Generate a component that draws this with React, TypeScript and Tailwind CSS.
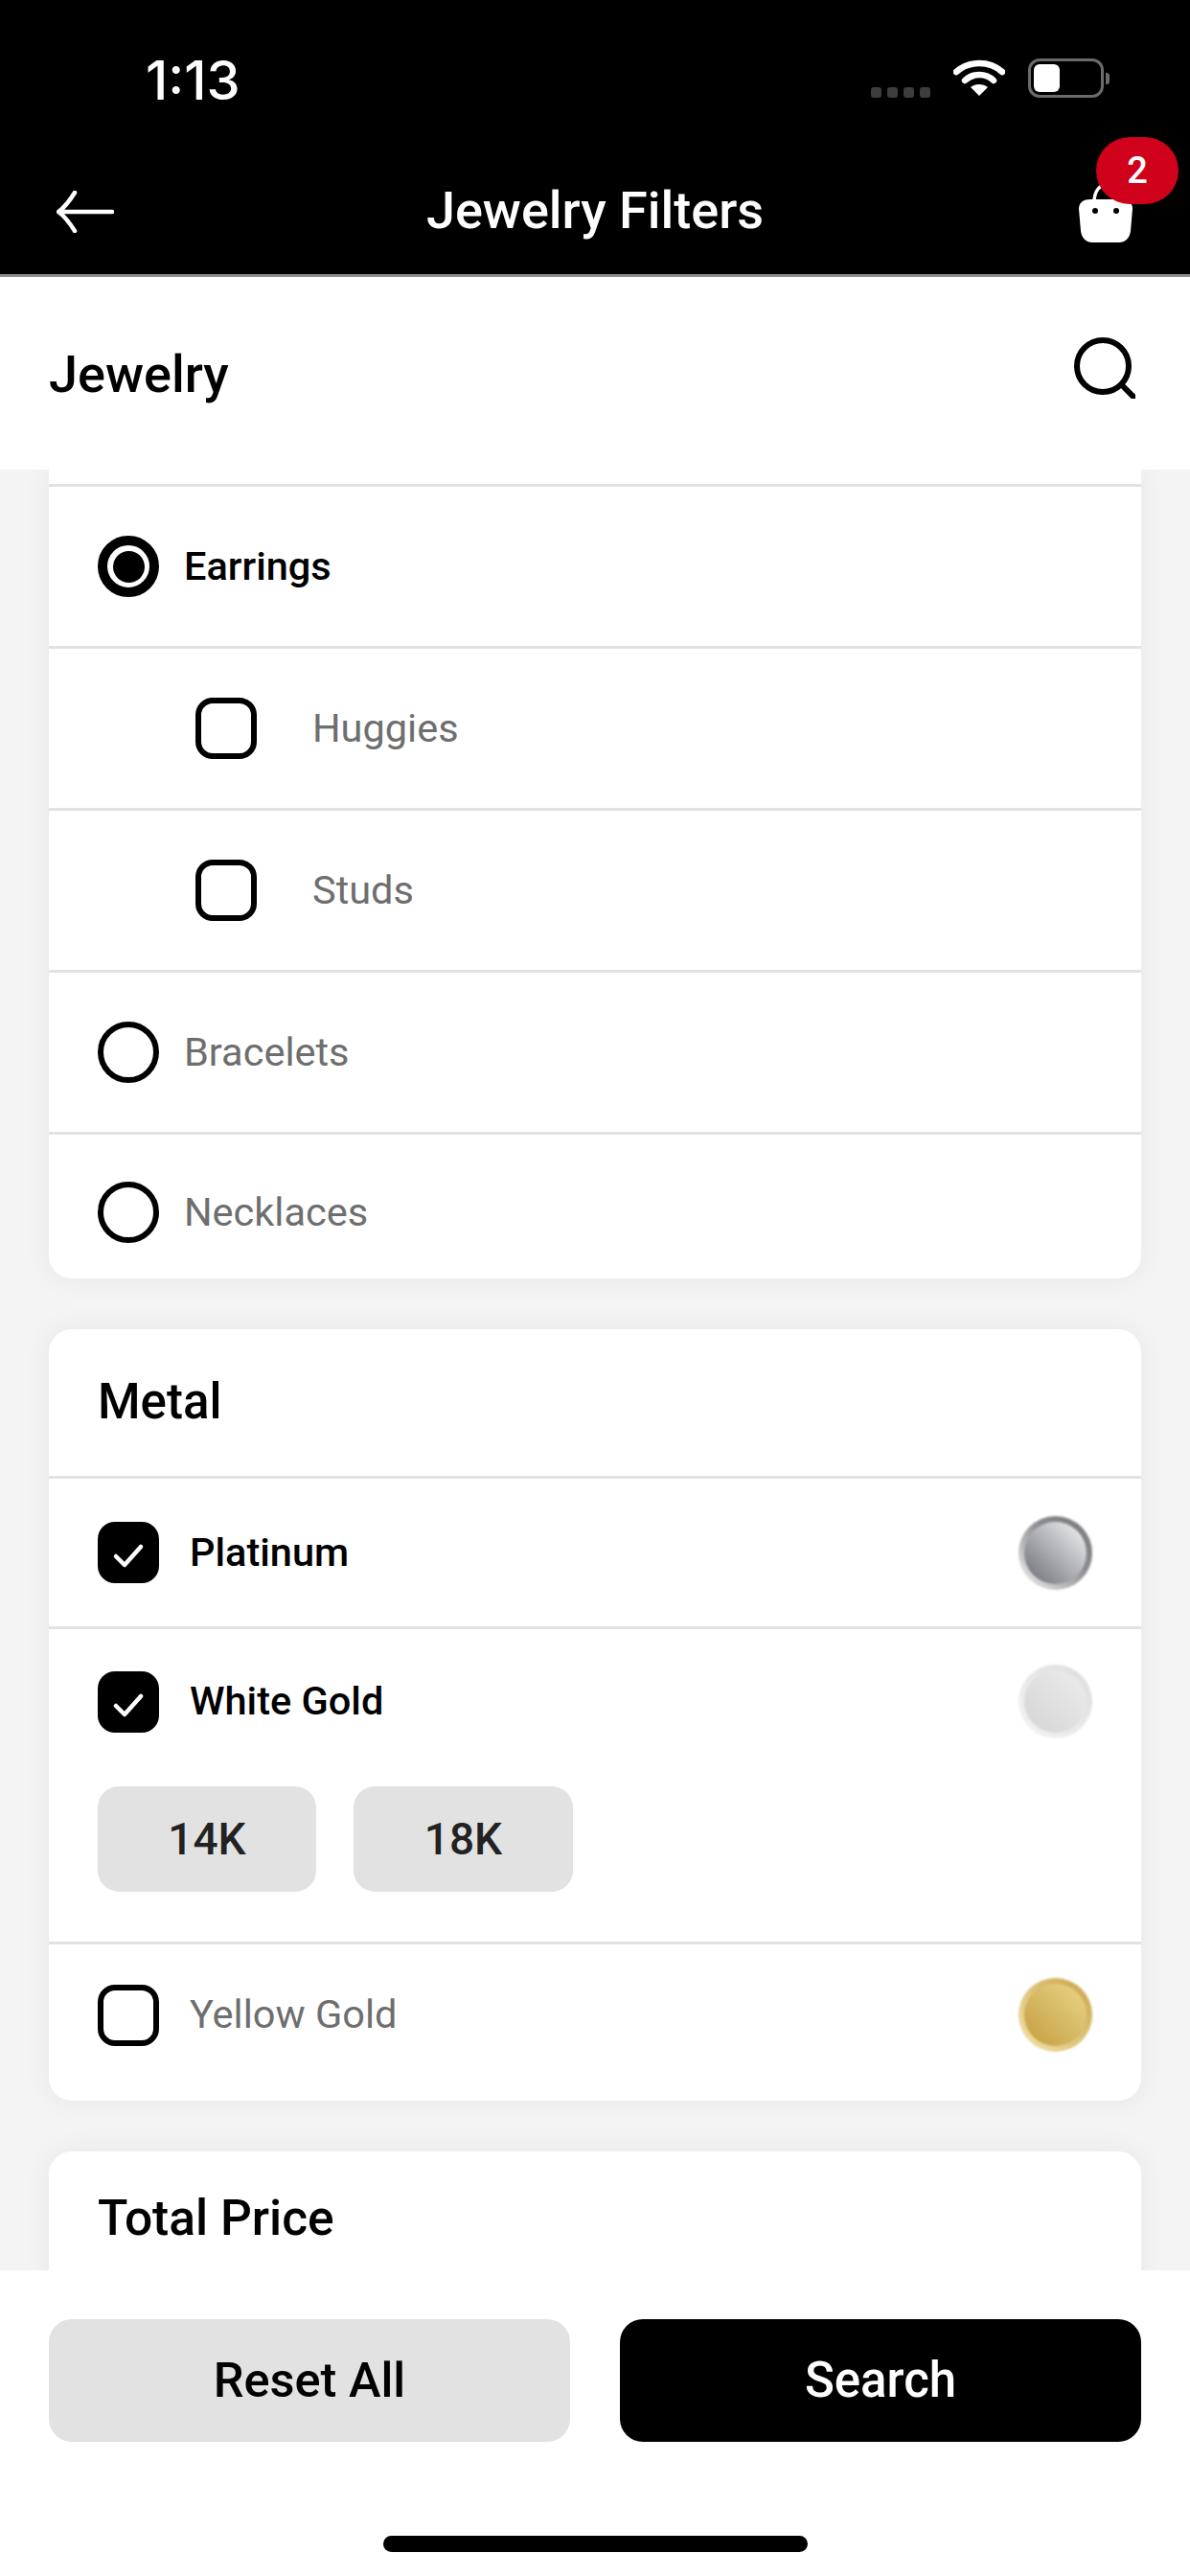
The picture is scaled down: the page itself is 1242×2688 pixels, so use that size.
const font = "font-['Roboto',sans-serif]"

function Radio({ checked }: { checked?: boolean }) {
  if (checked) {
    return (
      <div className="w-[64px] h-[64px] rounded-full border-[10px] border-black flex items-center justify-center shrink-0">
        <div className="w-[33px] h-[33px] rounded-full bg-black" />
      </div>
    )
  }
  return <div className="w-[64px] h-[64px] rounded-full border-[6px] border-black shrink-0" />
}

function Checkbox({ checked }: { checked?: boolean }) {
  if (checked) {
    return (
      <div className="w-[64px] h-[64px] rounded-[18px] bg-black flex items-center justify-center shrink-0">
        <svg width="36" height="36" viewBox="0 0 36 36" fill="none" className="mt-[6px]">
          <path d="M5 19 L14 28 L31 9" stroke="white" strokeWidth="4.5" strokeLinecap="round" strokeLinejoin="round" />
        </svg>
      </div>
    )
  }
  return <div className="w-[64px] h-[64px] rounded-[18px] border-[6px] border-black shrink-0" />
}

function Swatch({ ring, fill }: { ring: string; fill: string }) {
  return (
    <div className={`w-[77px] h-[77px] rounded-full p-[6px] shrink-0 blur-[1px] ${ring}`}>
      <div className={`w-full h-full rounded-full ${fill}`} />
    </div>
  )
}

function Row({ children, className }: { children: React.ReactNode; className: string }) {
  return <div className={`flex items-center border-t-[3px] border-[#e2e2e2] ${className}`}>{children}</div>
}

export default function App() {
  return (
    <div className={`w-[1242px] h-[2688px] flex flex-col overflow-hidden bg-[#f4f4f4] ${font}`}>
      {/* Status bar + nav */}
      <div className="h-[289px] bg-black border-b-[3px] border-[#8a8a8a] shrink-0 flex flex-col text-white">
        <div className="h-[120px] relative flex items-end justify-between pl-[152px] pr-[84px] pb-[5px]">
          <span className="text-[56px] leading-[62px] font-medium font-['Inter',sans-serif]">1:13</span>
          <div className="flex items-start gap-[24px] mb-[13px]">
            <div className="flex gap-[6px] mt-[30px]">
              <div className="w-[11px] h-[11px] rounded-[3px] bg-[#3d3d3d]" />
              <div className="w-[11px] h-[11px] rounded-[3px] bg-[#3d3d3d]" />
              <div className="w-[11px] h-[11px] rounded-[3px] bg-[#3d3d3d]" />
              <div className="w-[11px] h-[11px] rounded-[3px] bg-[#3d3d3d]" />
            </div>
            <svg width="54" height="40" viewBox="0 0 54 40" fill="none">
              <path d="M3 14 C16 2 38 2 51 14" stroke="white" strokeWidth="6.5" strokeLinecap="round" />
              <path d="M12 23 C20 15 34 15 42 23" stroke="white" strokeWidth="6.5" strokeLinecap="round" />
              <path d="M27 39 L18 30 C23 26 31 26 36 30 Z" fill="white" />
            </svg>
            <div className="flex items-center">
              <div className="w-[79px] h-[41px] rounded-[12px] border-[3px] border-[#6b6b6b] p-[3px]">
                <div className="w-[27px] h-full rounded-[6px] bg-white" />
              </div>
              <div className="w-[4px] h-[12px] ml-[2px] rounded-r-[3px] bg-[#6b6b6b]" />
            </div>
          </div>
        </div>
        <div className="flex-1 relative flex items-center justify-center">
          <span className="text-[54px] font-medium leading-none mt-[33px]">Jewelry Filters</span>
          <svg className="absolute left-[59px] top-[79px]" width="60" height="44" viewBox="0 0 60 44" fill="none">
            <path d="M58 22 H3 M19 2 C14 10 9 17 2 22 C9 27 14 34 19 42" stroke="white" strokeWidth="4.5" strokeLinecap="round" strokeLinejoin="round" />
          </svg>
          <svg className="absolute left-[1126px] top-[71px]" width="56" height="62" viewBox="0 0 56 62" fill="none">
            <path d="M16 20 C16 -4 40 -4 40 20" stroke="white" strokeWidth="3.5" />
            <path d="M12 17 H44 C51 17 56 20 56 27 L54 50 C53 58 48 62 42 62 H14 C8 62 3 58 2 50 L0 27 C0 20 5 17 12 17 Z" fill="white" />
            <circle cx="17" cy="29" r="3" fill="black" />
            <circle cx="39" cy="29" r="3" fill="black" />
          </svg>
          <div className="absolute left-[1144px] top-[23px] w-[86px] h-[70px] rounded-full bg-[#d0021b] flex items-center justify-center text-[38px] font-medium leading-none">
            2
          </div>
        </div>
      </div>

      {/* Title bar */}
      <div className="h-[201px] bg-white shrink-0 flex items-center justify-between pl-[51px] pr-[57px]">
        <span className="text-[54px] font-medium text-black mt-[2px]">Jewelry</span>
        <svg width="64" height="64" viewBox="0 0 64 64" fill="none" className="mb-[12px]">
          <circle cx="30" cy="30" r="27" stroke="black" strokeWidth="6" />
          <path d="M50 50 L62 62" stroke="black" strokeWidth="6" strokeLinecap="round" />
        </svg>
      </div>

      {/* Scroll area */}
      <div className="flex-1 min-h-0 overflow-hidden px-[51px] flex flex-col gap-[53px]">
        <div className="bg-white rounded-b-[24px] shrink-0 pt-[15px] shadow-[0_0_30px_rgba(0,0,0,0.06)]">
          <Row className="h-[169px] pl-[51px] gap-[26px]">
            <Radio checked />
            <span className="text-[41.5px] font-medium text-black">Earrings</span>
          </Row>
          <Row className="h-[169px] pl-[153px] gap-[58px]">
            <Checkbox />
            <span className="text-[41.5px] text-[#6e6e6e]">Huggies</span>
          </Row>
          <Row className="h-[169px] pl-[153px] gap-[58px]">
            <Checkbox />
            <span className="text-[41.5px] text-[#6e6e6e]">Studs</span>
          </Row>
          <Row className="h-[169px] pl-[51px] gap-[26px]">
            <Radio />
            <span className="text-[41.5px] text-[#6e6e6e]">Bracelets</span>
          </Row>
          <Row className="h-[153px] pl-[51px] gap-[26px] !items-start pt-[49px]">
            <Radio />
            <span className="text-[41.5px] leading-[64px] text-[#6e6e6e]">Necklaces</span>
          </Row>
        </div>

        <div className="bg-white rounded-[24px] shrink-0 shadow-[0_0_30px_rgba(0,0,0,0.06)]">
          <div className="h-[153px] flex items-center pl-[51px]">
            <span className="text-[51px] font-medium text-black">Metal</span>
          </div>
          <Row className="h-[157px] pl-[51px] pr-[51px]">
            <Checkbox checked />
            <span className="ml-[32px] flex-1 text-[41.5px] font-medium text-black">Platinum</span>
            <Swatch
              ring="bg-[linear-gradient(45deg,#f4f4f4,#8b8b8d_60%,#77777a)]"
              fill="bg-[linear-gradient(45deg,#696c72,#f6f6f8)]"
            />
          </Row>
          <div className="h-[329px] border-t-[3px] border-[#e2e2e2] pl-[51px] pr-[51px] pt-[37px]">
            <div className="flex items-center">
              <Checkbox checked />
              <span className="ml-[32px] flex-1 text-[41.5px] font-medium text-black">White Gold</span>
              <Swatch
                ring="bg-[linear-gradient(45deg,#f4f4f4,#dcdcdc)]"
                fill="bg-[linear-gradient(45deg,#d4d4d5,#ededee)]"
              />
            </div>
            <div className="flex gap-[39px] mt-[50px]">
              <div className="w-[228px] h-[110px] rounded-[22px] bg-[#e2e2e2] flex items-center justify-center text-[46px] font-medium text-[#222]">14K</div>
              <div className="w-[229px] h-[110px] rounded-[22px] bg-[#e2e2e2] flex items-center justify-center text-[46px] font-medium text-[#222]">18K</div>
            </div>
          </div>
          <Row className="h-[166px] pl-[51px] pr-[51px] pb-[16px]">
            <Checkbox />
            <span className="ml-[32px] flex-1 text-[41.5px] text-[#6e6e6e]">Yellow Gold</span>
            <Swatch
              ring="bg-[linear-gradient(45deg,#f1e3ad,#c9a347)]"
              fill="bg-[linear-gradient(45deg,#c49c3f,#ead68a)]"
            />
          </Row>
        </div>

        <div className="bg-white rounded-t-[24px] shrink-0 h-[200px] pl-[51px] pt-[31px] shadow-[0_0_30px_rgba(0,0,0,0.06)]">
          <span className="text-[51.5px] font-medium text-black">Total Price</span>
        </div>
      </div>

      {/* Footer */}
      <div className="h-[319px] bg-white shrink-0 flex flex-col items-center px-[51px] pt-[51px]">
        <div className="flex w-full gap-[52px]">
          <button className="flex-1 h-[128px] rounded-[24px] bg-[#e2e2e2] text-[50.5px] font-medium text-black">Reset All</button>
          <button className="flex-1 h-[128px] rounded-[24px] bg-black text-[51px] font-medium text-white">Search</button>
        </div>
        <div className="w-[443px] h-[17px] rounded-full bg-black mt-[98px]" />
      </div>
    </div>
  )
}
